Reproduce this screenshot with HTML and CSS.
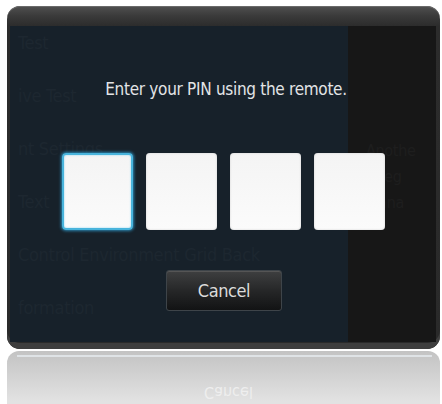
FILE: index.html
```html
<!DOCTYPE html>
<html>
<head>
<meta charset="utf-8">
<link rel="stylesheet" href="styles.css">
</head>
<body>
<div class="device">
  <div class="screen">
    <div class="bg-left">
      <div class="ghost first">Test</div>
      <div class="ghost">ive Test</div>
      <div class="ghost">nt Settings</div>
      <div class="ghost">Text</div>
      <div class="ghost">Control Environment Grid Back</div>
      <div class="ghost">formation</div>
    </div>
    <div class="bg-right">
      <div class="ghost r">Anothe</div>
      <div class="ghost r">Integ</div>
      <div class="ghost r">Mana</div>
    </div>
    <div class="dialog">
      <p class="prompt">Enter your PIN using the remote.</p>
      <div class="pins">
        <div class="pin active"></div>
        <div class="pin"></div>
        <div class="pin"></div>
        <div class="pin"></div>
      </div>
      <button class="cancel">Cancel</button>
    </div>
  </div>
</div>
<div class="reflection">
  <div class="refl-line"></div>
  <div class="refl-text">Cancel</div>
</div>
</body>
</html>
```
FILE: styles.css
```css
html, body {
  margin: 0;
  padding: 0;
  background: #ffffff;
}
body {
  width: 442px;
  height: 404px;
  overflow: hidden;
  font-family: "DejaVu Sans Condensed", "Open Sans", sans-serif;
}
.device {
  margin: 6px 0 0 7px;
  width: 433px;
  height: 343px;
  box-sizing: border-box;
  border-radius: 13px;
  background: linear-gradient(#505050 0px, #3a3a3a 10px, #2c2c2c 20px, #2a2a2a 100%);
  padding: 20px 4px 7px 3px;
  box-shadow: inset 0 1px 0 #6a6a6a, inset 0 -6px 0 #3e3e3e;
}
.screen {
  position: relative;
  height: 316px;
  display: grid;
  grid-template-columns: 338px 88px;
  overflow: hidden;
}
.bg-left {
  background: #17212a;
  padding: 0 0 0 8px;
}
.bg-right {
  background: #171717;
  padding: 112px 0 0 18px;
}
.ghost {
  color: #1d2730;
  font-size: 18px;
  line-height: 53px;
  letter-spacing: -0.3px;
  white-space: nowrap;
}
.ghost.first { margin-top: -10px; }
.ghost.r {
  color: #1e1e1e;
  line-height: 26px;
  font-size: 16px;
}
.dialog {
  position: absolute;
  inset: 0;
  display: flex;
  flex-direction: column;
  align-items: center;
}
.prompt {
  margin: 51px 0 0 6px;
  color: #e2e4e6;
  font-size: 17px;
  letter-spacing: -0.3px;
  line-height: 24px;
}
.pins {
  margin-top: 52px;
  display: flex;
  gap: 13px;
}
.pin {
  width: 71px;
  height: 77px;
  box-sizing: border-box;
  background: linear-gradient(#f4f4f4, #fbfbfb);
  border-radius: 4px;
  box-shadow: inset 0 0 2px #c9c9c9;
}
.pin.active {
  border: 2px solid #49b4dc;
  box-shadow: 0 0 3px 1px #2b86b0, inset 0 0 2px #7fd0ef;
}
.cancel {
  margin-top: 40px;
  margin-left: 2px;
  width: 116px;
  height: 41px;
  border: 1px solid #3e4449;
  border-radius: 3px;
  background: linear-gradient(#3e3f40 0%, #262728 50%, #121314 100%);
  color: #dcdcdc;
  font-family: "DejaVu Sans Condensed", "Open Sans", sans-serif;
  font-size: 18px;
  letter-spacing: -0.4px;
  padding: 0;
  box-shadow: inset 0 1px 0 #555;
}
.reflection {
  margin: 2px 0 0 7px;
  width: 433px;
  height: 60px;
  border-radius: 12px 12px 0 0;
  background: linear-gradient(#c3c3c3 0px, #cfcfcf 20px, #e2e2e2 50px);
  position: relative;
  overflow: hidden;
}
.refl-line {
  margin: 4px 8px 0 10px;
  height: 2px;
  background: #dfe3e6;
}
.refl-text {
  position: absolute;
  left: 0;
  right: 0;
  top: 32px;
  text-align: center;
  padding-left: 10px;
  color: #eeeeee;
  font-size: 16px;
  line-height: 19px;
  transform: scaleY(-1);
}
```
